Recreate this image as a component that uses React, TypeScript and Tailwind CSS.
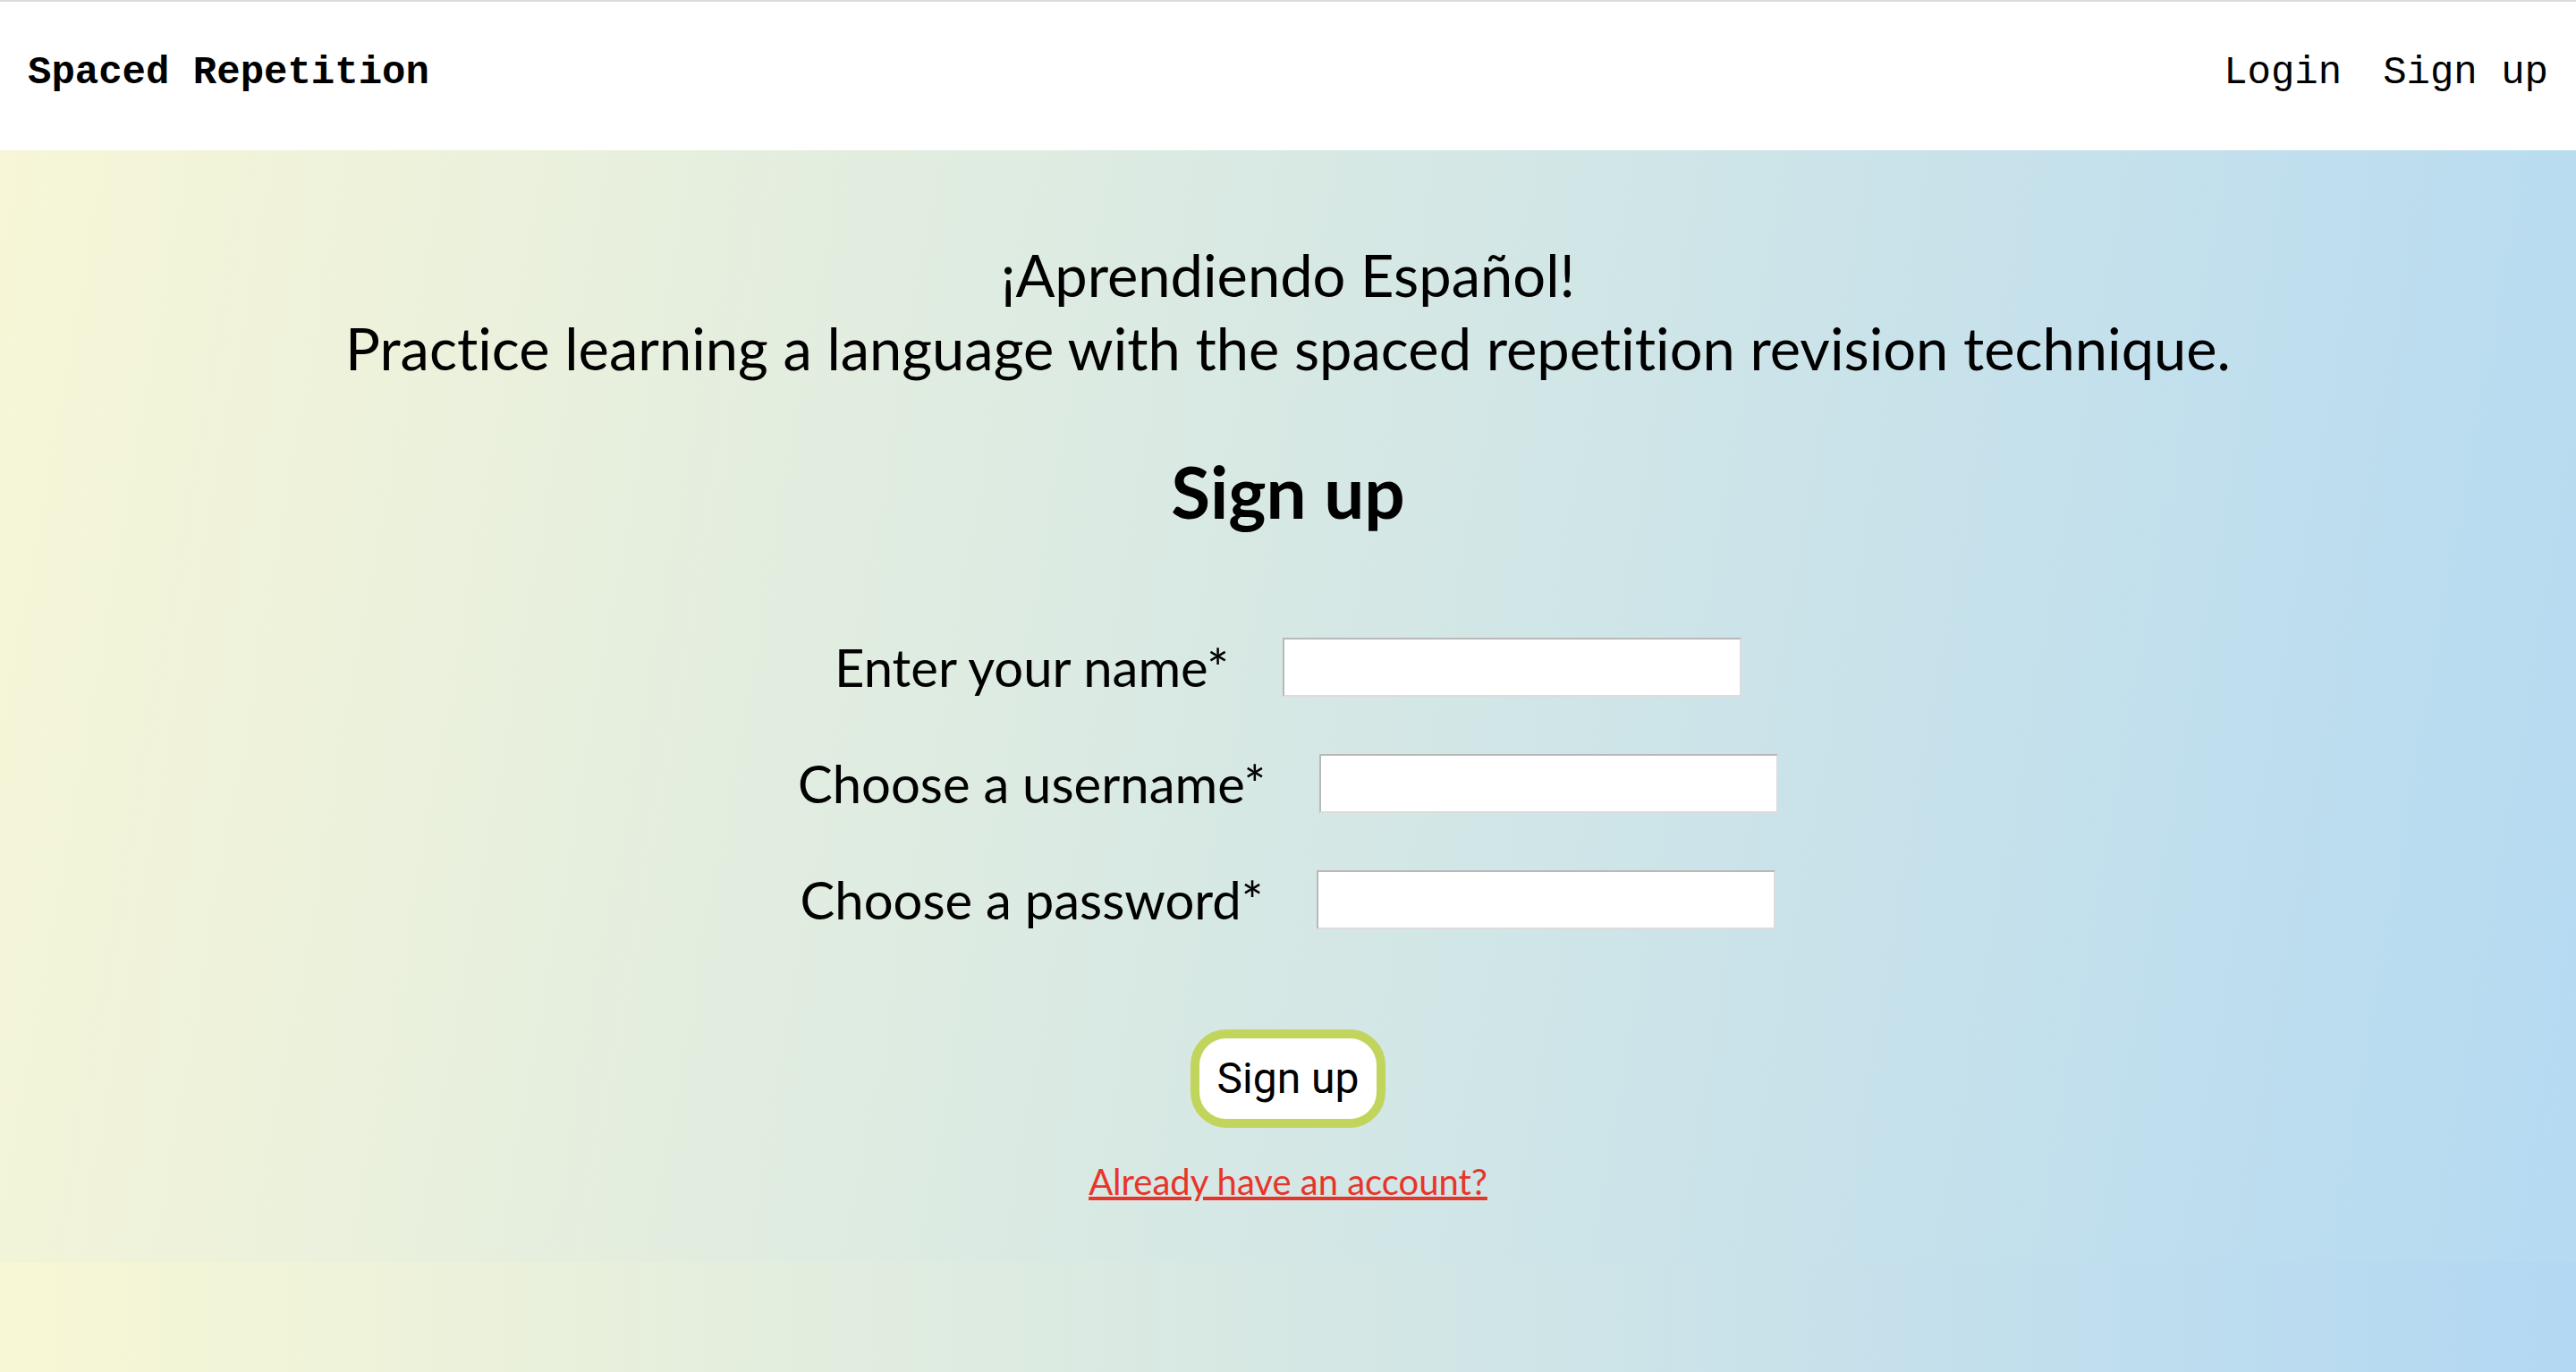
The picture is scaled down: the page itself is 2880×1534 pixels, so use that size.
import React from "react";

const Row = ({ label, type = "text" }: { label: string; type?: string }) => (
  <div className="flex items-center justify-center gap-[60px]">
    <label className="text-[58px] leading-[66px] text-black">{label}</label>
    <input
      type={type}
      className="w-[513px] h-[66px] bg-white border-2 border-solid border-t-[#b8b8b8] border-l-[#b8b8b8] border-r-[#dcdcdc] border-b-[#dcdcdc] outline-none"
    />
  </div>
);

export default function App() {
  return (
    <div className="min-h-[1534px] w-full bg-[linear-gradient(to_right,#f8f7d5,#b3d8f3)] font-['Lato','Noto_Sans',sans-serif] [font-variant-ligatures:none]">
      <header className="h-[168px] bg-white border-t-2 border-[#dcdce1] flex items-center justify-between px-[31px] pb-[8px] font-['Liberation_Mono','Courier_New',monospace] text-black">
        <div className="text-[44px] font-bold">Spaced Repetition</div>
        <nav className="flex items-center gap-[46px] text-[44px]">
          <a href="#">Login</a>
          <a href="#">Sign up</a>
        </nav>
      </header>
      <main className="bg-[linear-gradient(100deg,#f7f6d7,#b5daf2)] pt-[98px] pb-[66px] flex flex-col items-center text-black">
        <p className="text-[65px] leading-[82px] text-center">
          ¡Aprendiendo Español!
          <br />
          Practice learning a language with the spaced repetition revision technique.
        </p>
        <h1 className="mt-[71px] text-[80px] leading-[96px] font-bold">Sign up</h1>
        <form className="mt-[116px] flex flex-col items-center gap-[64px] w-full">
          <Row label="Enter your name*" />
          <Row label="Choose a username*" />
          <Row label="Choose a password*" type="password" />
          <button
            type="button"
            className="mt-[48px] bg-white border-[10px] border-solid border-[#c1d55c] rounded-[40px] px-[20px] py-[17px] text-[48px] leading-[56px] font-['Roboto',sans-serif] text-black"
          >
            Sign up
          </button>
        </form>
        <a href="#" className="mt-[36px] text-[40px] leading-[48px] text-[#e8352a] underline">
          Already have an account?
        </a>
      </main>
    </div>
  );
}
